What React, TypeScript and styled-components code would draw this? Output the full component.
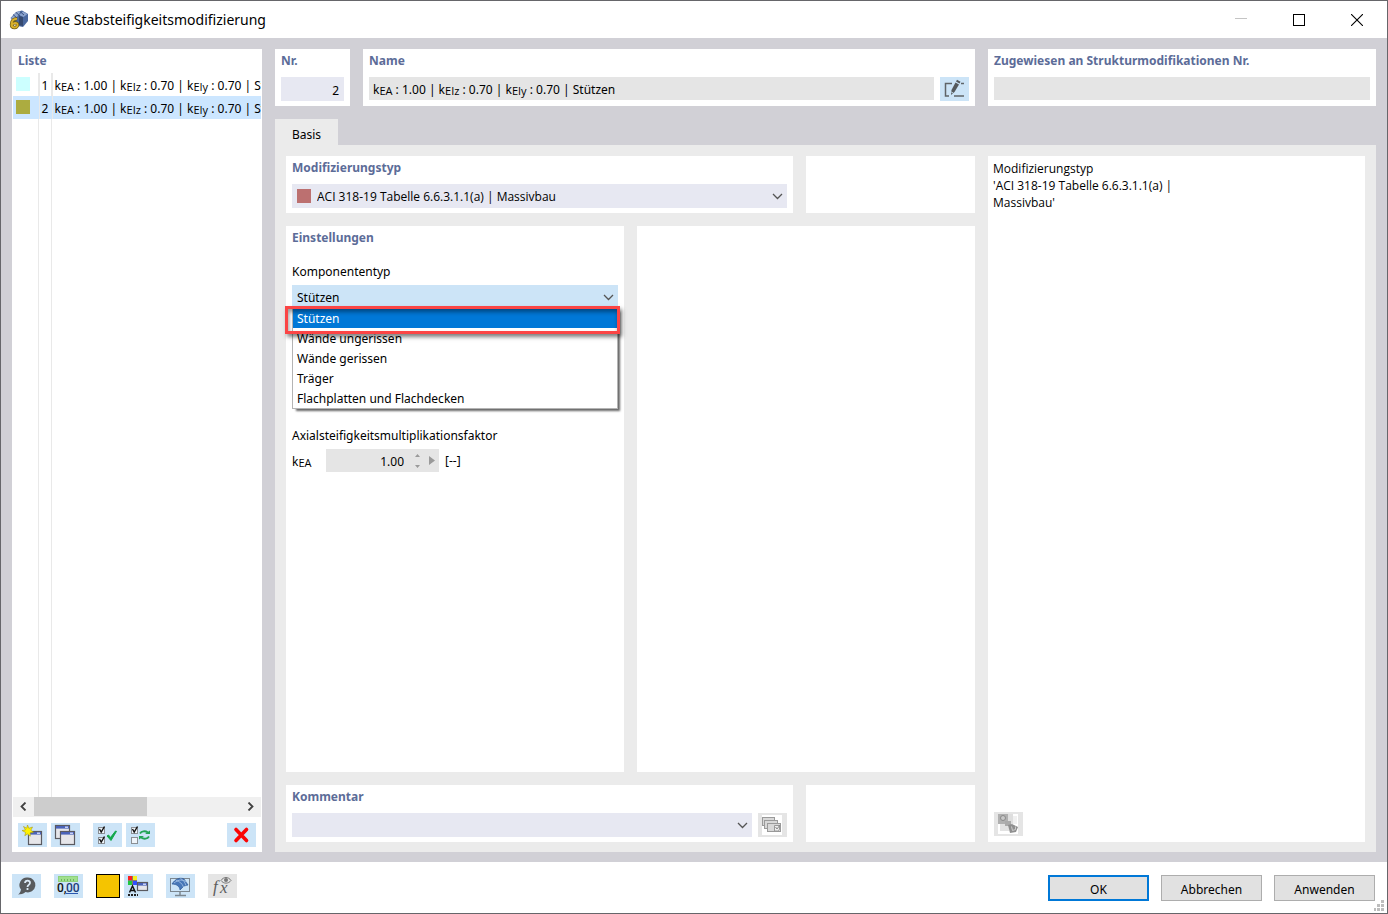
import React from "react";
import styled, { createGlobalStyle } from "styled-components";

const ink = "#000000";
const heading = "#5c6c98";
const chrome = "#d1d0d6";
const sheet = "#ebebeb";
const field = "#e7e8f2";
const locked = "#e5e5e5";
const tint = "#cce4f7";
const codeFont = `"Open Sans", "Noto Sans", sans-serif`;

const GlobalStyle = createGlobalStyle`
  *, *::before, *::after { box-sizing: border-box; }
  body { margin: 0; }
  body, button, input, select {
    font-family: "Noto Sans", "Open Sans", sans-serif;
    font-size: 12px;
    color: ${ink};
  }
  button { padding: 0; border: 0; background: none; }
  svg { display: block; }
`;

const Dialog = styled.div`
  display: flex;
  flex-direction: column;
  min-height: 100vh;
  border: 1px solid #66666a;
  background: #fff;
`;

const TitleBar = styled.header`
  display: flex;
  align-items: center;
  height: 37px;
  padding: 0 1px 0 8px;
`;

const Title = styled.h1`
  flex: 1;
  margin: 0 0 0 6px;
  font-size: 14px;
  font-weight: 400;
  line-height: 20px;
`;

const WindowButton = styled.button`
  display: grid;
  place-items: center;
  width: 58px;
  height: 36px;
`;

const Body = styled.main`
  flex: 1;
  display: grid;
  grid-template-columns: 250px minmax(0, 1fr);
  gap: 13px;
  padding: 11px 11px 10px;
  background: ${chrome};
`;

const Editor = styled.div`
  display: flex;
  flex-direction: column;
  min-width: 0;
`;

const Panel = styled.section`
  display: flex;
  flex-direction: column;
  min-width: 0;
  min-height: 57px;
  padding: 0 6px 5px;
  background: #fff;
`;

const PanelTitle = styled.h2`
  margin: 0;
  height: 28px;
  padding-top: 3px;
  font-size: 12px;
  font-weight: 700;
  line-height: 18px;
  color: ${heading};
`;

const HeaderRow = styled.div`
  display: grid;
  grid-template-columns: 75px minmax(0, 1fr) 388px;
  gap: 13px;
`;

const FieldRow = styled.div`
  display: flex;
  gap: 6px;
`;

const TextField = styled.input<{ $locked?: boolean }>`
  width: 100%;
  min-width: 0;
  height: ${(p) => (p.$locked ? 23 : 24)}px;
  padding: 2px 5px 0;
  border: 0;
  border-radius: 0;
  background: ${(p) => (p.$locked ? locked : field)};
  text-align: right;
`;

const NameField = styled.div`
  flex: 1;
  height: 23px;
  padding: 0 4px;
  background: ${locked};
  line-height: 25px;
  white-space: nowrap;
  overflow: hidden;
`;

const Sub = styled.span`
  position: relative;
  top: 1px;
  font-family: ${codeFont};
  font-size: 11px;
`;

const IconButton = styled.button<{ $off?: boolean }>`
  flex: none;
  width: 29px;
  height: 24px;
  background: ${(p) => (p.$off ? locked : tint)};
`;

const ListPanel = styled(Panel)`
  padding: 0 1px 5px;
  & > ${PanelTitle} { height: 24px; padding-left: 5px; }
`;

const ListBody = styled.div`
  flex: 1;
  overflow: hidden;
  background:
    linear-gradient(#e9e9e9, #e9e9e9) 25px 0 / 1px 100% no-repeat,
    linear-gradient(#e9e9e9, #e9e9e9) 38px 0 / 1px 100% no-repeat;
`;

const ListTable = styled.table`
  width: 100%;
  table-layout: fixed;
  border-collapse: collapse;
`;

const ListRow = styled.tr<{ $selected?: boolean }>`
  height: 23px;
  background: ${(p) => (p.$selected ? "#cce6ff" : "transparent")};
`;

const ListCell = styled.td<{ $width?: number }>`
  width: ${(p) => (p.$width ? p.$width + "px" : "auto")};
  padding: 3px 0 0 2px;
  border-right: ${(p) => (p.$width ? "1px solid #e9e9e9" : "0")};
  line-height: 20px;
  white-space: nowrap;
  overflow: hidden;
`;

const Swatch = styled.span<{ $color: string }>`
  display: block;
  flex: none;
  width: 14px;
  height: 14px;
  background: ${(p) => p.$color};

  ${ListCell} > & { margin: 0 0 4px 1px; }
`;

const ScrollBar = styled.div`
  display: flex;
  align-items: flex-start;
  justify-content: space-between;
  height: 20px;
  background: #f0f0f0;
`;

const ScrollArrow = styled.button`
  display: grid;
  place-items: center;
  width: 21px;
  height: 19px;
`;

const ScrollTrack = styled.div`
  flex: 1;
  height: 19px;
`;

const ScrollThumb = styled.div`
  width: 55%;
  height: 100%;
  background: #cdcdcd;
`;

const ListTools = styled.div`
  display: flex;
  gap: 4px;
  padding: 6px 5px 0;
`;

const ToolGap = styled.span<{ $wide?: boolean }>`
  flex: ${(p) => (p.$wide ? "1" : "0 0 5px")};
`;

const TabStrip = styled.div`
  display: flex;
  margin-top: 13px;
`;

const Tab = styled.button`
  width: 63px;
  height: 26px;
  padding-top: 4px;
  background: ${sheet};
`;

const Sheet = styled.div`
  flex: 1;
  display: grid;
  grid-template-columns: minmax(0, 1fr) 377px;
  gap: 13px;
  padding: 11px 11px 10px;
  background: ${sheet};
`;

const SheetMain = styled.div`
  display: grid;
  grid-template-rows: 57px minmax(380px, 1fr) 57px;
  gap: 13px;
`;

const WideRow = styled.div`
  display: grid;
  grid-template-columns: minmax(0, 3fr) minmax(0, 1fr);
  gap: 13px;
`;

const HalfRow = styled.div`
  display: grid;
  grid-template-columns: minmax(0, 1fr) minmax(0, 1fr);
  gap: 13px;
`;

const DropFrame = styled.div<{ $active?: boolean }>`
  position: relative;
  flex: 1;
  display: flex;
  align-items: center;
  gap: 6px;
  height: 24px;
  padding: 0 4px 0 5px;
  background: ${(p) => (p.$active ? tint : field)};
`;

const Drop = styled.select<{ $code?: boolean }>`
  flex: 1;
  min-width: 0;
  height: 24px;
  padding: 0;
  border: 0;
  appearance: none;
  background: transparent;
  outline: none;
  ${(p) => p.$code && `font-family: ${codeFont};`}
`;

const ComboInput = styled.input`
  flex: 1;
  min-width: 0;
  height: 24px;
  padding: 0;
  border: 0;
  background: transparent;
  outline: none;
`;

const Label = styled.label`
  display: block;
  height: 22px;
  line-height: 18px;
`;

const FactorLabel = styled(Label)`
  height: 31px;
  padding-top: 9px;
`;

const DropGroup = styled.div`
  position: relative;
  height: 164px;
  padding-top: 9px;
`;

const Options = styled.ul`
  position: absolute;
  top: 54px;
  left: 0;
  right: 0;
  margin: 0;
  padding: 0;
  list-style: none;
  border: 1px solid #b4b4b4;
  border-top: 0;
  background: #fff;
  box-shadow: 3px 3px 2px -1px rgba(0, 0, 0, 0.6);
`;

const Option = styled.li<{ $selected?: boolean }>`
  height: 20px;
  padding-left: 4px;
  line-height: 22px;
  color: ${(p) => (p.$selected ? "#fff" : ink)};
  background: ${(p) => (p.$selected ? "#0078d7" : "transparent")};
`;

const Highlight = styled.div`
  position: absolute;
  top: 52px;
  left: -7px;
  right: -2px;
  height: 28px;
  border: 3px solid #fb4545;
  box-shadow: 2px 3px 4px rgba(0, 0, 0, 0.5), inset 1px 3px 4px rgba(0, 0, 0, 0.4);
`;

const FactorRow = styled.div`
  display: flex;
  align-items: center;
  height: 23px;
  line-height: 18px;
`;

const FactorName = styled.span`
  width: 34px;
  padding-top: 2px;
`;

const FactorUnit = styled.span`
  padding-top: 1px;
`;

const Spinner = styled.div`
  display: flex;
  align-items: center;
  width: 113px;
  height: 23px;
  margin-right: 6px;
  background: ${locked};
`;

const SpinInput = styled.input`
  width: 78px;
  height: 23px;
  padding: 1px 0 0;
  border: 0;
  background: transparent;
  text-align: right;
`;

const InfoText = styled.p`
  flex: 1;
  margin: 0;
  padding-top: 4px;
  font-family: ${codeFont};
  line-height: 17px;
`;

const InfoPanel = styled(Panel)`
  padding: 0 5px 6px;
`;

const InfoTools = styled.div`
  display: flex;
  padding-left: 1px;
`;

const Footer = styled.footer`
  display: flex;
  align-items: center;
  height: 51px;
  padding: 0 12px 0 11px;
  position: relative;
`;

const FooterTools = styled.div`
  flex: 1;
  display: flex;
  gap: 13px;
  padding-bottom: 3px;
`;

const ToolPair = styled.div`
  display: flex;
  gap: 4px;
`;

const ColorButton = styled.button`
  width: 24px;
  height: 24px;
  border: 1px solid #000;
  background: #f5c400;
`;

const Actions = styled.div`
  display: flex;
  gap: 12px;
`;

const ActionButton = styled.button<{ $primary?: boolean }>`
  width: 101px;
  height: 26px;
  padding-top: 3px;
  border: ${(p) => (p.$primary ? "2px solid #0078d7" : "1px solid #adadad")};
  background: #e1e1e1;
`;

const Grip = styled.svg`
  position: absolute;
  right: 3px;
  bottom: 2px;
`;

const Chevron = () => (
  <svg width="11" height="7" viewBox="0 0 11 7" fill="none" stroke="#555" strokeWidth="1.3" aria-hidden="true">
    <path d="M1 1l4.5 4.5L10 1" />
  </svg>
);

const Icon = ({ children }: { children: React.ReactNode }) => (
  <svg width="29" height="24" viewBox="0 0 29 24" fill="none" aria-hidden="true">
    {children}
  </svg>
);

const MiniWindow = ({ x, y, w = 14, h = 13 }: { x: number; y: number; w?: number; h?: number }) => (
  <g>
    <rect x={x + 0.5} y={y + 0.5} width={w} height={h} fill="#e6e6ea" stroke="#5a5a60" strokeWidth="1.2" />
    <rect x={x + 1} y={y + 1} width={w - 1} height="2.6" fill="#4a62b8" />
    <rect x={x + w - 4} y={y + 1.5} width="3" height="1.5" fill="#c5d0f5" />
  </g>
);

const CheckSquare = ({ y, checked }: { y: number; checked?: boolean }) => (
  <g>
    <rect x="5.5" y={y + 0.5} width="6" height="6" fill="#eef4fa" stroke="#8b8f94" />
    {checked && <path d={`M6.5 ${y + 2}l1.7 3L11.5 ${y - 0.5}`} stroke="#111" strokeWidth="1.4" />}
  </g>
);

const AppIcon = () => (
  <svg width="20" height="20" viewBox="0 0 20 20" aria-hidden="true">
    <path d="M1.5 8L7 2l6-1.5L19 4v7l-5 6-5-1z" fill="#4a689e" />
    <path d="M2 8l5-5.500 5-1.500-4 6-3 4z" fill="#8fa7cf" />
    <path d="M10 5l4-3.500L18.500 4l-4 3z" fill="#8ba3cd" />
    <path d="M10 6l4 1v9l-4-1z" fill="#35496f" />
    <path d="M4 4.500L8 8M7 2.500L11 6M11 1.500L15 5" stroke="#3a5282" strokeWidth="1" />
    <path d="M8 9C5 8.500 2.500 10.500 2.500 14.500S8.500 18.500 8.500 15 3.500 13 3 15" fill="none" stroke="#6d5a10" strokeWidth="3.400" />
    <path d="M8 9C5 8.500 2.500 10.500 2.500 14.500S8.500 18.500 8.500 15 3.500 13 3 15" fill="none" stroke="#d8b02c" strokeWidth="2" />
  </svg>
);

const Stiffness = ({ suffix }: { suffix: string }) => (
  <>
    k<Sub>EA</Sub> : 1.00 | k<Sub>EIz</Sub> : 0.70 | k<Sub>EIy</Sub> : 0.70 | {suffix}
  </>
);

const entries = [
  { nr: 1, color: "#ccffff", suffix: "Stützen" },
  { nr: 2, color: "#acac40", suffix: "Stützen" },
];

const components = ["Stützen", "Wände ungerissen", "Wände gerissen", "Träger", "Flachplatten und Flachdecken"];

export default function App() {
  return (
    <Dialog>
      <GlobalStyle />
      <TitleBar>
        <AppIcon />
        <Title>Neue Stabsteifigkeitsmodifizierung</Title>
        <WindowButton aria-label="Minimieren" disabled>
          <svg width="12" height="12" viewBox="0 0 12 12" stroke="#c4c4c4"><path d="M0 4.500h12" /></svg>
        </WindowButton>
        <WindowButton aria-label="Maximieren">
          <svg width="12" height="12" viewBox="0 0 12 12" fill="none" stroke="#000"><rect x="0.500" y="0.500" width="11" height="11" /></svg>
        </WindowButton>
        <WindowButton aria-label="Schließen">
          <svg width="12" height="12" viewBox="0 0 12 12" stroke="#000" strokeWidth="1.100"><path d="M0 0l12 12M12 0L0 12" /></svg>
        </WindowButton>
      </TitleBar>

      <Body>
        <ListPanel>
          <PanelTitle>Liste</PanelTitle>
          <ListBody>
            <ListTable aria-label="Liste">
              <tbody>
                {entries.map((e) => (
                  <ListRow key={e.nr} $selected={e.nr === 2}>
                    <ListCell $width={26}><Swatch $color={e.color} /></ListCell>
                    <ListCell $width={13}>{e.nr}</ListCell>
                    <ListCell><Stiffness suffix={e.suffix} /></ListCell>
                  </ListRow>
                ))}
              </tbody>
            </ListTable>
          </ListBody>
          <ScrollBar>
            <ScrollArrow aria-label="Nach links">
              <svg width="7" height="9" viewBox="0 0 7 9" fill="none" stroke="#404040" strokeWidth="1.800"><path d="M5.500 0.500l-4 4 4 4" /></svg>
            </ScrollArrow>
            <ScrollTrack><ScrollThumb /></ScrollTrack>
            <ScrollArrow aria-label="Nach rechts">
              <svg width="7" height="9" viewBox="0 0 7 9" fill="none" stroke="#404040" strokeWidth="1.800"><path d="M1.500 0.500l4 4-4 4" /></svg>
            </ScrollArrow>
          </ScrollBar>
          <ListTools>
            <IconButton aria-label="Neu">
              <Icon>
                <MiniWindow x={10} y={8} w={13} />
                <path d="M9.500 2l1.400 3.300L14.500 4l-1.700 3.300 2.700 1.900-3.400.6.2 3.400-2.800-2.200-2.700 1.700.8-3.200L4 7.500l3.500-.5L5.500 3.500l3.200 1.700z" fill="#fff200" stroke="#a89c10" strokeWidth="0.600" />
              </Icon>
            </IconButton>
            <IconButton aria-label="Kopieren">
              <Icon><MiniWindow x={4} y={2} /><MiniWindow x={9} y={8} /></Icon>
            </IconButton>
            <ToolGap />
            <IconButton aria-label="Alle auswählen">
              <Icon>
                <CheckSquare y={4} checked />
                <CheckSquare y={14} checked />
                <path d="M14 13l1.500-1 2 2.500L22.500 8l1 .3L18 17.500z" fill="#12a84a" stroke="#12a84a" />
              </Icon>
            </IconButton>
            <IconButton aria-label="Auswahl umkehren">
              <Icon>
                <CheckSquare y={4} checked />
                <CheckSquare y={14} />
                <path d="M14 10.500c1.500-2.500 5-3 8-1M23 13.500c-1.500 2.500-5 3-8 1" stroke="#22a455" strokeWidth="1.800" />
                <path d="M24 7.500v3.500h-5zM13 16.500v-3.500h5z" fill="#22a455" />
              </Icon>
            </IconButton>
            <ToolGap $wide />
            <IconButton aria-label="Löschen">
              <Icon><path d="M9 6.500l10.500 11M19.500 6.500L9 17.500" stroke="#fa0505" strokeWidth="3.600" strokeLinecap="round" /></Icon>
            </IconButton>
          </ListTools>
        </ListPanel>

        <Editor>
          <HeaderRow>
            <Panel>
              <PanelTitle as="label" htmlFor="nr">Nr.</PanelTitle>
              <TextField id="nr" defaultValue="2" />
            </Panel>
            <Panel>
              <PanelTitle id="name-title">Name</PanelTitle>
              <FieldRow>
                <NameField role="textbox" aria-readonly="true" aria-labelledby="name-title">
                  <Stiffness suffix="Stützen" />
                </NameField>
                <IconButton aria-label="Name bearbeiten">
                  <Icon>
                    <path d="M12 6.500H5.500v12.500H9M21 6.500h3M14 19h10" stroke="#5f6468" strokeWidth="1.500" />
                    <path d="M15.500 5.500l3.500 2L14.500 15l-3.500 3 .5-5z" fill="#55595c" />
                    <path d="M16 4.500l1-1.700 3.500 2-1 1.700z" fill="#55595c" />
                    <path d="M11.300 15l2 1.200" stroke={tint} />
                  </Icon>
                </IconButton>
              </FieldRow>
            </Panel>
            <Panel>
              <PanelTitle as="label" htmlFor="assigned">Zugewiesen an Strukturmodifikationen Nr.</PanelTitle>
              <TextField id="assigned" $locked readOnly />
            </Panel>
          </HeaderRow>

          <TabStrip role="tablist">
            <Tab role="tab" aria-selected="true">Basis</Tab>
          </TabStrip>

          <Sheet>
            <SheetMain>
              <WideRow>
                <Panel>
                  <PanelTitle as="label" htmlFor="modtype">Modifizierungstyp</PanelTitle>
                  <DropFrame>
                    <Swatch $color="#bc7070" />
                    <Drop id="modtype" $code><option>ACI 318-19 Tabelle 6.6.3.1.1(a) | Massivbau</option></Drop>
                    <Chevron />
                  </DropFrame>
                </Panel>
                <Panel />
              </WideRow>
              <HalfRow>
                <Panel>
                  <PanelTitle>Einstellungen</PanelTitle>
                  <DropGroup>
                    <Label htmlFor="component">Komponententyp</Label>
                    <DropFrame $active>
                      <Drop id="component" defaultValue="Stützen">
                        {components.map((c) => <option key={c}>{c}</option>)}
                      </Drop>
                      <Chevron />
                    </DropFrame>
                    <Options role="listbox" aria-label="Komponententyp">
                      {components.map((c, i) => (
                        <Option key={c} role="option" aria-selected={i === 0} $selected={i === 0}>{c}</Option>
                      ))}
                    </Options>
                    <Highlight />
                  </DropGroup>
                  <FactorLabel htmlFor="factor">Axialsteifigkeitsmultiplikationsfaktor</FactorLabel>
                  <FactorRow>
                    <FactorName>k<Sub>EA</Sub></FactorName>
                    <Spinner>
                      <SpinInput id="factor" defaultValue="1.00" readOnly />
                      <svg width="35" height="23" viewBox="0 0 35 23" fill="#9a9a9a" aria-hidden="true">
                        <path d="M11 8l2.500-3L16 8zM11 16l2.500 3 2.500-3zM25 7l6 4.500-6 4.500z" />
                      </svg>
                    </Spinner>
                    <FactorUnit>[--]</FactorUnit>
                  </FactorRow>
                </Panel>
                <Panel />
              </HalfRow>
              <WideRow>
                <Panel>
                  <PanelTitle as="label" htmlFor="comment">Kommentar</PanelTitle>
                  <FieldRow>
                    <DropFrame>
                      <ComboInput id="comment" />
                      <Chevron />
                    </DropFrame>
                    <IconButton $off aria-label="Kommentar übernehmen" disabled>
                      <Icon>
                        <rect x="4" y="2" width="20" height="20" fill="#fff" />
                        <g fill="#d8d8d8" stroke="#9a9a9a">
                          <rect x="4.500" y="4.500" width="12" height="8" />
                          <rect x="6.500" y="7.500" width="13" height="8" />
                          <rect x="9.500" y="10.500" width="13" height="8" />
                        </g>
                        <path d="M16.500 12.500h5v4l-2 1.500h-3z" fill="#eee" stroke="#999" />
                        <path d="M17.500 14l1.500 2 3-4" stroke="#888" />
                      </Icon>
                    </IconButton>
                  </FieldRow>
                </Panel>
                <Panel />
              </WideRow>
            </SheetMain>
            <InfoPanel>
              <InfoText>
                Modifizierungstyp<br />'ACI 318-19 Tabelle 6.6.3.1.1(a) |<br />Massivbau'
              </InfoText>
              <InfoTools>
                <IconButton $off aria-label="Grafik" disabled>
                  <Icon>
                    <rect x="4" y="2" width="20" height="20" fill="#fff" />
                    <rect x="14" y="2" width="5" height="10" fill="#dedede" />
                    <rect x="19" y="4" width="4" height="8" fill="#f0f0f0" />
                    <rect x="6" y="12" width="9" height="7" fill="#e2e2e2" />
                    <rect x="4" y="2" width="10" height="10" fill="#b0b0b0" />
                    <circle cx="9" cy="6" r="2.500" fill="#c8c8c8" stroke="#8a8a8a" />
                    <rect x="11" y="9" width="6" height="5" fill="#aaa" />
                    <path d="M14 13l4-1 6 3-2 5-6 1z" fill="#8f8f8f" />
                    <path d="M17.500 14.500l1 4 3-1v-3" stroke="#ccc" />
                  </Icon>
                </IconButton>
              </InfoTools>
            </InfoPanel>
          </Sheet>
        </Editor>
      </Body>

      <Footer>
        <FooterTools>
          <IconButton aria-label="Hilfe">
            <Icon>
              <path d="M15.500 3.500a7.500 7.500 0 1 1-2 14.600C11.500 20 8.500 20.500 6 20.500c1.500-1 2.500-2.500 3-5A7.500 7.500 0 0 1 15.500 3.500z" fill="#585b5e" />
              <path d="M13 9c.3-3.200 5.200-3 5 0-.2 2-2.500 1.800-2.500 4M15.500 14v2" stroke="#dceaf6" strokeWidth="1.800" />
            </Icon>
          </IconButton>
          <IconButton aria-label="Einheiten und Dezimalstellen">
            <Icon>
              <rect x="4.500" y="2.500" width="19" height="5" fill="#a0e08e" stroke="#8ed27c" />
              <path d="M7.500 5v2M10.500 5v2M13.500 5v2M16.500 5v2M19.500 5v2" stroke="#6fb35e" />
              <text x="3" y="18" fontSize="12" fontWeight="500" fontFamily="Roboto, sans-serif" fill="#111">0,</text>
              <text x="12" y="18" fontSize="12" fontWeight="500" fontFamily="Roboto, sans-serif" fill="#1d3c78">00</text>
              <path d="M12 19.500h12" stroke="#2a57b0" />
            </Icon>
          </IconButton>
          <ToolPair>
            <ColorButton aria-label="Farbe" />
            <IconButton aria-label="Darstellung">
              <Icon>
                <rect x="4" y="2" width="9" height="9" fill="#8a7a6a" />
                <rect x="4" y="2" width="4" height="4" fill="#fb2020" />
                <rect x="9" y="2" width="4" height="4" fill="#f6f020" />
                <rect x="4" y="7" width="4" height="4" fill="#20c840" />
                <rect x="9" y="7" width="4" height="4" fill="#3050ff" />
                <path d="M5.500 18.500L8.500 12l3 6.500M6.500 16.500h4" stroke="#111" strokeWidth="1.500" />
                <path d="M4 21h10" stroke="#222" strokeWidth="2" strokeDasharray="2 1" />
                <MiniWindow x={13} y={8} w={10} h={8} />
              </Icon>
            </IconButton>
          </ToolPair>
          <IconButton aria-label="Ansicht">
            <Icon>
              <rect x="4.500" y="4.500" width="19" height="13" stroke="#7c8790" />
              <path d="M14 18v3M9 21.500h11" stroke="#7c8790" strokeWidth="1.500" />
              <path d="M6 10C9 5 14 3 18 5l4 6-4 1-4 4c0-3-3-6-8-6z" fill="#4877b8" stroke="#2e5a98" strokeWidth="0.700" />
              <path d="M10 6.500c4 1 6 3 7.500 6.500M8 9c5-4 9-3.500 12.500-1M14.500 4.500c3 1.500 4.500 4 5.500 7" stroke="#a9c6e8" strokeWidth="0.800" />
            </Icon>
          </IconButton>
          <IconButton $off aria-label="Formel" disabled>
            <Icon>
              <text x="5" y="18" fontSize="17" fontStyle="italic" fontFamily="Liberation Serif, serif" fill="#5d5d5d">f</text>
              <text x="12" y="19" fontSize="17" fontStyle="italic" fontFamily="Liberation Serif, serif" fill="#5d5d5d">x</text>
              <path d="M13 6.500c2.500-4 7.500-4 10 0-2.500 3.500-7.500 3.500-10 0z" stroke="#777" />
              <circle cx="18" cy="6" r="2" fill="#777" />
            </Icon>
          </IconButton>
        </FooterTools>
        <Actions>
          <ActionButton $primary>OK</ActionButton>
          <ActionButton>Abbrechen</ActionButton>
          <ActionButton>Anwenden</ActionButton>
        </Actions>
        <Grip width="10" height="11" viewBox="0 0 10 11" fill="#bdbdbd" aria-hidden="true">
          <path d="M7 0h3v3H7zM7 4h3v3H7zM7 8h3v3H7zM3 4h3v3H3zM3 8h3v3H3zM0 8h2v3H0z" />
        </Grip>
      </Footer>
    </Dialog>
  );
}
